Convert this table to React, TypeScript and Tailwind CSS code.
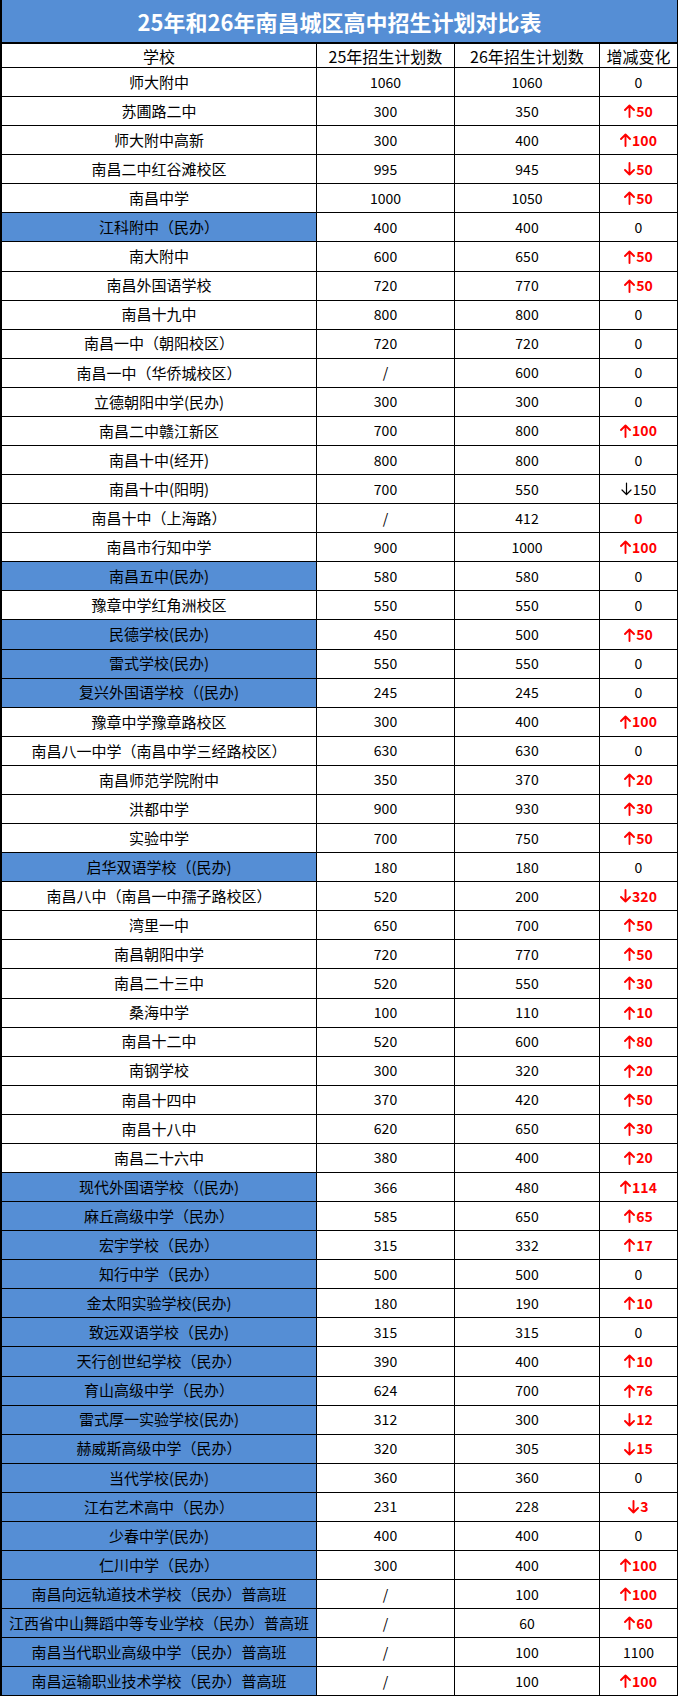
type Change = { text: string; kind: "up" | "down" | "none" | "red" | "black" };

type Row = { name: string; a: string; b: string; c: Change; blue?: boolean };

const z: Change = { text: "0", kind: "none" };
const up = (n: number): Change => ({ text: `↑${n}`, kind: "up" });
const dn = (n: number): Change => ({ text: `↓${n}`, kind: "down" });

const rows: Row[] = [
  { name: "师大附中", a: "1060", b: "1060", c: z },
  { name: "苏圃路二中", a: "300", b: "350", c: up(50) },
  { name: "师大附中高新", a: "300", b: "400", c: up(100) },
  { name: "南昌二中红谷滩校区", a: "995", b: "945", c: dn(50) },
  { name: "南昌中学", a: "1000", b: "1050", c: up(50) },
  { name: "江科附中（民办）", a: "400", b: "400", c: z, blue: true },
  { name: "南大附中", a: "600", b: "650", c: up(50) },
  { name: "南昌外国语学校", a: "720", b: "770", c: up(50) },
  { name: "南昌十九中", a: "800", b: "800", c: z },
  { name: "南昌一中（朝阳校区）", a: "720", b: "720", c: z },
  { name: "南昌一中（华侨城校区）", a: "/", b: "600", c: z },
  { name: "立德朝阳中学(民办)", a: "300", b: "300", c: z },
  { name: "南昌二中赣江新区", a: "700", b: "800", c: up(100) },
  { name: "南昌十中(经开)", a: "800", b: "800", c: z },
  { name: "南昌十中(阳明)", a: "700", b: "550", c: { text: "↓150", kind: "black" } },
  { name: "南昌十中（上海路）", a: "/", b: "412", c: { text: "0", kind: "red" } },
  { name: "南昌市行知中学", a: "900", b: "1000", c: up(100) },
  { name: "南昌五中(民办)", a: "580", b: "580", c: z, blue: true },
  { name: "豫章中学红角洲校区", a: "550", b: "550", c: z },
  { name: "民德学校(民办)", a: "450", b: "500", c: up(50), blue: true },
  { name: "雷式学校(民办)", a: "550", b: "550", c: z, blue: true },
  { name: "复兴外国语学校（(民办)", a: "245", b: "245", c: z, blue: true },
  { name: "豫章中学豫章路校区", a: "300", b: "400", c: up(100) },
  { name: "南昌八一中学（南昌中学三经路校区）", a: "630", b: "630", c: z },
  { name: "南昌师范学院附中", a: "350", b: "370", c: up(20) },
  { name: "洪都中学", a: "900", b: "930", c: up(30) },
  { name: "实验中学", a: "700", b: "750", c: up(50) },
  { name: "启华双语学校（(民办)", a: "180", b: "180", c: z, blue: true },
  { name: "南昌八中（南昌一中孺子路校区）", a: "520", b: "200", c: dn(320) },
  { name: "湾里一中", a: "650", b: "700", c: up(50) },
  { name: "南昌朝阳中学", a: "720", b: "770", c: up(50) },
  { name: "南昌二十三中", a: "520", b: "550", c: up(30) },
  { name: "桑海中学", a: "100", b: "110", c: up(10) },
  { name: "南昌十二中", a: "520", b: "600", c: up(80) },
  { name: "南钢学校", a: "300", b: "320", c: up(20) },
  { name: "南昌十四中", a: "370", b: "420", c: up(50) },
  { name: "南昌十八中", a: "620", b: "650", c: up(30) },
  { name: "南昌二十六中", a: "380", b: "400", c: up(20) },
  { name: "现代外国语学校（(民办)", a: "366", b: "480", c: up(114), blue: true },
  { name: "麻丘高级中学（民办）", a: "585", b: "650", c: up(65), blue: true },
  { name: "宏宇学校（民办）", a: "315", b: "332", c: up(17), blue: true },
  { name: "知行中学（民办）", a: "500", b: "500", c: z, blue: true },
  { name: "金太阳实验学校(民办)", a: "180", b: "190", c: up(10), blue: true },
  { name: "致远双语学校（民办)", a: "315", b: "315", c: z, blue: true },
  { name: "天行创世纪学校（民办）", a: "390", b: "400", c: up(10), blue: true },
  { name: "育山高级中学（民办）", a: "624", b: "700", c: up(76), blue: true },
  { name: "雷式厚一实验学校(民办)", a: "312", b: "300", c: dn(12), blue: true },
  { name: "赫威斯高级中学（民办）", a: "320", b: "305", c: dn(15), blue: true },
  { name: "当代学校(民办)", a: "360", b: "360", c: z, blue: true },
  { name: "江右艺术高中（民办）", a: "231", b: "228", c: dn(3), blue: true },
  { name: "少春中学(民办)", a: "400", b: "400", c: z, blue: true },
  { name: "仁川中学（民办）", a: "300", b: "400", c: up(100), blue: true },
  { name: "南昌向远轨道技术学校（民办）普高班", a: "/", b: "100", c: up(100), blue: true },
  { name: "江西省中山舞蹈中等专业学校（民办）普高班", a: "/", b: "60", c: up(60), blue: true },
  { name: "南昌当代职业高级中学（民办）普高班", a: "/", b: "100", c: { text: "1100", kind: "none" }, blue: true },
  { name: "南昌运输职业技术学校（民办）普高班", a: "/", b: "100", c: up(100), blue: true },
];

const font = { fontFamily: '"Noto Sans CJK SC", sans-serif' };

// arrow drawn like the wide-headed spreadsheet glyph
function Arrow({ down, bold }: { down: boolean; bold: boolean }) {
  return (
    <svg
      width="11"
      height="14"
      viewBox="0 0 11 14"
      className={`mr-[1px] ${down ? "rotate-180" : ""}`}
      fill="none"
      stroke="currentColor"
      strokeWidth={bold ? 1.9 : 1.2}
      strokeLinecap="round"
      strokeLinejoin="round"
    >
      <path d="M5.5 13V1.5M1 6l4.5-4.5L10 6" />
    </svg>
  );
}

function ChangeCell({ c }: { c: Change }) {
  const red = c.kind === "up" || c.kind === "down" || c.kind === "red";
  const arrow = c.text.startsWith("↑") || c.text.startsWith("↓") ? c.text[0] : "";
  const num = arrow ? c.text.slice(1) : c.text;
  return (
    <div
      className={`flex items-center justify-center text-[14px] ${
        red ? "text-[#ff0000] font-bold" : "text-black"
      }`}
    >
      {arrow && <Arrow down={arrow === "↓"} bold={red} />}
      {num}
    </div>
  );
}

export default function App() {
  return (
    <div className="w-[678px] h-[1698px] bg-white text-black" style={font}>
      <div className="border-l-2 border-r border-black">
        {/* title */}
        <div className="h-[44px] bg-[#558ed5] border-b-2 border-black flex items-center justify-center text-white text-[22px] font-bold">
          25年和26年南昌城区高中招生计划对比表
        </div>

        {/* header */}
        <div className="grid grid-cols-[315px_138px_145px_1fr] h-[24px] border-b border-black text-[16px] leading-none">
          <div className="flex items-center justify-center border-r border-black">学校</div>
          <div className="flex items-center justify-center border-r border-black">25年招生计划数</div>
          <div className="flex items-center justify-center border-r border-black">26年招生计划数</div>
          <div className="flex items-center justify-center">增减变化</div>
        </div>

        {/* body */}
        <div className="h-[1628px] flex flex-col">
          {rows.map((r, i) => (
            <div
              key={i}
              className="flex-1 grid grid-cols-[315px_138px_145px_1fr] border-b border-black"
            >
              <div
                className={`flex items-center justify-center border-r border-black text-[15px] whitespace-nowrap ${
                  r.blue ? "bg-[#558ed5]" : ""
                }`}
              >
                {r.name}
              </div>
              <div className="flex items-center justify-center border-r border-black text-[14px]">
                {r.a}
              </div>
              <div className="flex items-center justify-center border-r border-black text-[14px]">
                {r.b}
              </div>
              <ChangeCell c={r.c} />
            </div>
          ))}
        </div>
      </div>
    </div>
  );
}
